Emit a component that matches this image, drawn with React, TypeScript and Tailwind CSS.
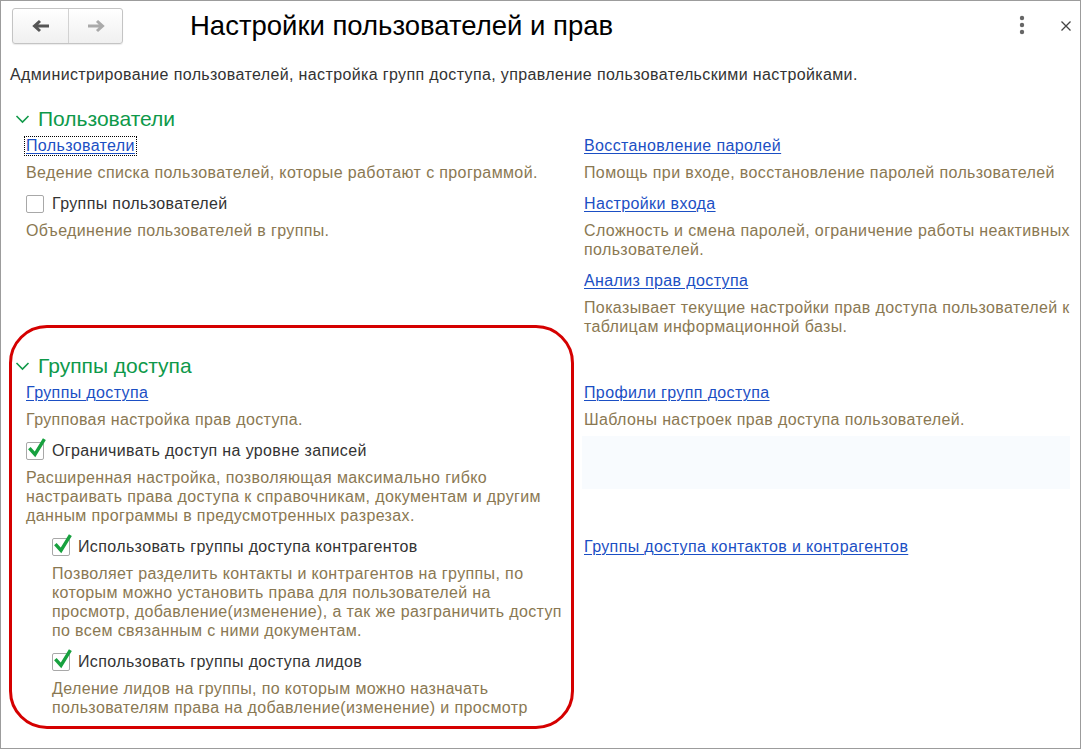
import React from "react";

const Check = ({ checked }: { checked?: boolean }) => (
  <span className="relative inline-block w-[18px] h-[18px] shrink-0 border border-[#a8a8a8] rounded-[2px] bg-white">
    {checked && (
      <svg className="absolute left-[1px] top-[-5px]" width="18" height="20" viewBox="0 0 18 20">
        <path d="M2.5 11.5 L7 16.5 L15.5 2.5" fill="none" stroke="#17a13f" strokeWidth="3.4" strokeLinecap="square" />
      </svg>
    )}
  </span>
);

const Link = ({ children, focused }: { children: React.ReactNode; focused?: boolean }) => (
  <div className="h-[24px] flex items-center">
    <a
      className={
        "text-[#1b4fc4] underline underline-offset-2 decoration-1 cursor-pointer leading-[18px] " +
        (focused ? "outline outline-1 outline-dotted outline-black -mx-[1px] px-[1px]" : "")
      }
    >
      {children}
    </a>
  </div>
);

const CheckRow = ({ children, checked }: { children: React.ReactNode; checked?: boolean }) => (
  <div className="h-[24px] flex items-center gap-2 text-[#333]">
    <Check checked={checked} />
    <span>{children}</span>
  </div>
);

const Desc = ({ children }: { children: React.ReactNode }) => (
  <p className="mt-[5px] text-[#8a7852] leading-[19px]">{children}</p>
);

const Item = ({ children }: { children: React.ReactNode }) => <div className="flex flex-col">{children}</div>;

const Header = ({ title }: { title: string }) => (
  <div className="h-[28px] flex items-center gap-[8px] pl-[5px] pb-[2px]">
    <svg width="15" height="10" viewBox="0 0 15 10">
      <path d="M1.5 2 L7.5 8 L13.5 2" fill="none" stroke="#129a4a" strokeWidth="1.6" />
    </svg>
    <span className="text-[21px] tracking-normal text-[#0e994a] leading-[26px]">{title}</span>
  </div>
);

export default function App() {
  return (
    <div className="w-[1082px] h-[750px] bg-white" style={{ fontFamily: '"Liberation Sans", Arial, sans-serif' }}>
      <div className="relative w-[1081px] h-[749px] border border-[#9c9c9c] text-[16px] tracking-[0.37px] overflow-hidden">
        {/* top bar */}
        <div className="h-[50px] flex items-center pl-[11px] pr-[8px]">
          <div className="flex h-[36px] w-[111px] mt-[-1px] rounded-[3px] border border-[#c4c4c4] bg-gradient-to-b from-white to-[#f0f0f0] shadow-[0_1px_1px_rgba(0,0,0,0.08)]">
            <button className="w-[56px] flex items-center justify-center border-r border-[#d2d2d2]">
              <svg width="20" height="14" viewBox="0 0 20 14">
                <path d="M18 7 H5 M9 2 L3.5 7 L9 12" fill="none" stroke="#555" strokeWidth="3" />
              </svg>
            </button>
            <button className="flex-1 flex items-center justify-center">
              <svg width="20" height="14" viewBox="0 0 20 14">
                <path d="M2 7 H15 M11 2 L16.5 7 L11 12" fill="none" stroke="#aaa" strokeWidth="3" />
              </svg>
            </button>
          </div>
          <h1 className="ml-[67px] text-[27.5px] tracking-normal text-black leading-[30px]">Настройки пользователей и прав</h1>
          <div className="ml-auto flex items-center">
            <svg width="8" height="20" viewBox="0 0 8 20" className="mr-[34px] mt-[-2px]">
              <circle cx="4" cy="3" r="2.2" fill="#666" />
              <circle cx="4" cy="10" r="2.2" fill="#666" />
              <circle cx="4" cy="17" r="2.2" fill="#666" />
            </svg>
            <svg width="12" height="12" viewBox="0 0 12 12">
              <path d="M1.5 1.5 L10.5 10.5 M10.5 1.5 L1.5 10.5" stroke="#444" strokeWidth="1.3" />
            </svg>
          </div>
        </div>

        <div className="pl-[9px]">
          <p className="h-[19px] leading-[19px] mt-[14px] text-[#333]">
            Администрирование пользователей, настройка групп доступа, управление пользовательскими настройками.
          </p>

          {/* section 1 */}
          <div className="mt-[22px]">
            <Header title="Пользователи" />
            <div className="grid grid-cols-[558px_1fr] pl-[16px]">
              <div className="flex flex-col gap-[10px]">
                <Item>
                  <Link focused>Пользователи</Link>
                  <Desc>Ведение списка пользователей, которые работают с программой.</Desc>
                </Item>
                <Item>
                  <CheckRow>Группы пользователей</CheckRow>
                  <Desc>Объединение пользователей в группы.</Desc>
                </Item>
              </div>
              <div className="flex flex-col gap-[10px] pr-[6px]">
                <Item>
                  <Link>Восстановление паролей</Link>
                  <Desc>Помощь при входе, восстановление паролей пользователей</Desc>
                </Item>
                <Item>
                  <Link>Настройки входа</Link>
                  <Desc>Сложность и смена паролей, ограничение работы неактивных пользователей.</Desc>
                </Item>
                <Item>
                  <Link>Анализ прав доступа</Link>
                  <Desc>Показывает текущие настройки прав доступа пользователей к таблицам информационной базы.</Desc>
                </Item>
              </div>
            </div>
          </div>

          {/* section 2 */}
          <div className="mt-[17px]">
            <Header title="Группы доступа" />
            <div className="grid grid-cols-[558px_1fr] pl-[16px] gap-y-[10px]">
              <div className="flex flex-col gap-[10px] pr-[16px]">
                <Item>
                  <Link>Группы доступа</Link>
                  <Desc>Групповая настройка прав доступа.</Desc>
                </Item>
                <Item>
                  <CheckRow checked>Ограничивать доступ на уровне записей</CheckRow>
                  <Desc>
                    Расширенная настройка, позволяющая максимально гибко настраивать права доступа к справочникам,
                    документам и другим данным программы в предусмотренных разрезах.
                  </Desc>
                </Item>
              </div>
              <div className="flex flex-col pr-[10px]">
                <Item>
                  <Link>Профили групп доступа</Link>
                  <Desc>Шаблоны настроек прав доступа пользователей.</Desc>
                </Item>
                <div className="mt-[7px] ml-[-2px] h-[53px] bg-[#f8fbfe]" />
              </div>

              <div className="flex flex-col gap-[10px] pl-[26px] pr-[14px]">
                <Item>
                  <CheckRow checked>Использовать группы доступа контрагентов</CheckRow>
                  <Desc>
                    Позволяет разделить контакты и контрагентов на группы, по которым можно установить права для
                    пользователей на просмотр, добавление(изменение), а так же разграничить доступ по всем связанным с
                    ними документам.
                  </Desc>
                </Item>
                <Item>
                  <CheckRow checked>Использовать группы доступа лидов</CheckRow>
                  <Desc>
                    Деление лидов на группы, по которым можно назначать пользователям права на добавление(изменение) и
                    просмотр
                  </Desc>
                </Item>
              </div>
              <div>
                <Link>Группы доступа контактов и контрагентов</Link>
              </div>
            </div>
          </div>
        </div>

        {/* annotation frame */}
        <div className="absolute left-[8px] top-[324px] w-[565px] h-[404px] border-[3px] border-[#d50000] rounded-[38px] pointer-events-none" />
      </div>
    </div>
  );
}
